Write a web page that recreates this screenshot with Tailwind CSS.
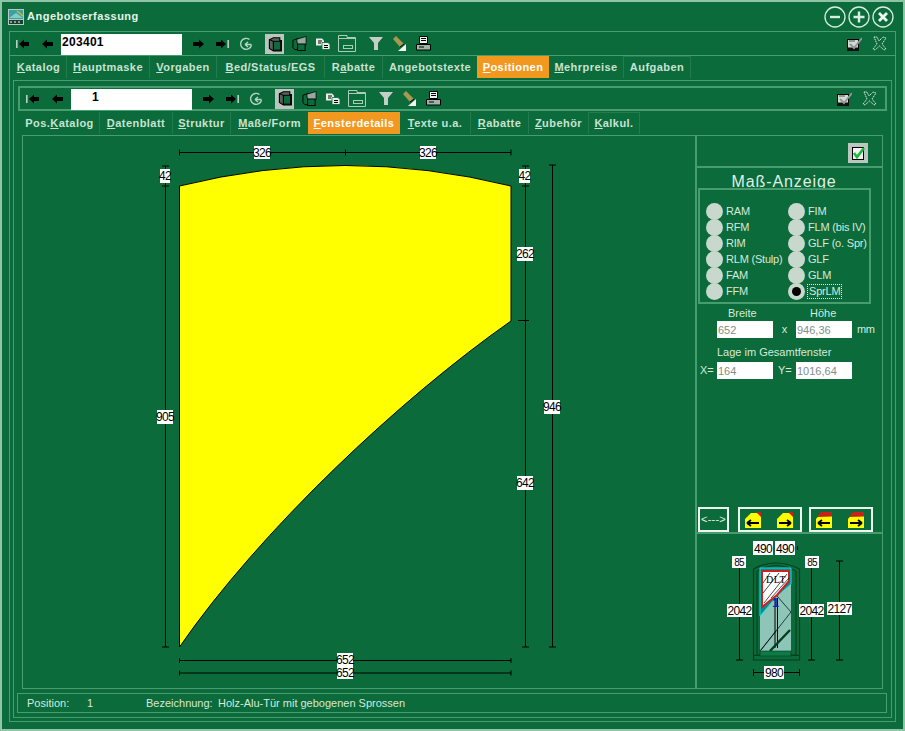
<!DOCTYPE html>
<html lang="de">
<head>
<meta charset="utf-8">
<title>Angebotserfassung</title>
<script src="https://cdn.jsdelivr.net/npm/@tailwindcss/browser@4"></script>
</head>
<body class="bg-[#0b6b3a]">
<svg width="0" height="0" class="absolute">
  <defs>
    <symbol id="first" viewBox="0 0 13 12"><rect x="0" y="2" width="1.6" height="8" fill="#b9cfc2"/><path d="M3 6 L8 1.5 V4 H13 V8 H8 V10.5 Z" fill="#000"/></symbol>
    <symbol id="prev" viewBox="0 0 11 12"><path d="M0 6 L5 1.5 V4 H11 V8 H5 V10.5 Z" fill="#000"/></symbol>
    <symbol id="next" viewBox="0 0 11 12"><path d="M11 6 L6 1.5 V4 H0 V8 H6 V10.5 Z" fill="#000"/></symbol>
    <symbol id="last" viewBox="0 0 13 12"><path d="M10 6 L5 1.5 V4 H0 V8 H5 V10.5 Z" fill="#000"/><rect x="11.4" y="2" width="1.6" height="8" fill="#b9cfc2"/></symbol>
    <symbol id="refresh" viewBox="0 0 14 14"><path d="M10.5 2.5 A5.5 5.5 0 1 0 12.5 8 M12.5 7.5 H6 M6 7.5 L9 5 M6 7.5 L9 10" fill="none" stroke="#b5d6c4" stroke-width="1.4"/></symbol>
    <symbol id="frame" viewBox="0 0 20 20"><path d="M3 4 L8 1.5 H16 V5 H18 V18 H8 L3 15 Z" fill="#55635b" stroke="#000" stroke-width="1.4"/><rect x="8" y="6" width="9" height="11" fill="#0b6b3a" stroke="#000" stroke-width="1.2"/><path d="M3 4 L8 6 V18" fill="none" stroke="#000" stroke-width="1.2"/></symbol>
    <symbol id="frame2" viewBox="0 0 16 17"><path d="M1 5 L7 3 V15 H3 L1 13 Z" fill="#0b6b3a" stroke="#000"/><path d="M5 4 L15 1 V10 H6 Z" fill="#9aa89f" stroke="#000" stroke-width=".8"/><rect x="6" y="9" width="8" height="7" fill="#0b6b3a" stroke="#000"/></symbol>
    <symbol id="copy" viewBox="0 0 14 12"><path d="M0 0.5 H6 L8 2.5 V7.5 H0 Z" fill="#e8eee8"/><path d="M6 4.5 H12 L14 6.5 V11.5 H6 Z" fill="#e8eee8" stroke="#0b6b3a" stroke-width=".8"/><path d="M2 3 H6 M2 5 H5 M8 7.5 H12 M8 9.5 H12" stroke="#000"/></symbol>
    <symbol id="folder" viewBox="0 0 18 17"><path d="M0.5 16.5 V0.5 H9 V2.5 H17.5 V16.5 Z M0.5 3.5 H17.5" fill="none" stroke="#a9cdb9"/><rect x="5.5" y="10.5" width="9" height="3" fill="none" stroke="#a9cdb9"/></symbol>
    <symbol id="filter" viewBox="0 0 14 15"><path d="M0 1 H14 L9 7 V14 H5 V7 Z" fill="#c4cfc8"/></symbol>
    <symbol id="wand" viewBox="0 0 15 16"><path d="M1 3 L4 0 L12 8 L8 11 Z" fill="#a59a4e"/><path d="M14 8 V15 H6 Z" fill="#f2f4f2"/><path d="M8 11 L12 8" stroke="#000"/></symbol>
    <symbol id="printer" viewBox="0 0 15 15"><path d="M3.5 .5 H11.5 V7.5 H3.5 Z" fill="#eef2ee" stroke="#000"/><path d="M5 2.5 H10 M5 4.5 H10" stroke="#000"/><path d="M.5 8.5 H14.5 V14 H.5 Z" fill="#9fb5a8" stroke="#000"/><path d="M3 11 H8" stroke="#000"/></symbol>
    <symbol id="save" viewBox="0 0 15 14"><rect x=".5" y="2.5" width="11" height="11" fill="#d5dad6" stroke="#000"/><rect x="0" y="10.5" width="12" height="3.5" fill="#111"/><path d="M2 4 H8 M3 7 L7 11 L15 1" fill="none" stroke="#8d9a92" stroke-width="2"/></symbol>
    <symbol id="cross" viewBox="0 0 15 15"><path d="M2 1 L5 1 L7 5 L11 1 L14 2 L10 8 L14 13 L12 14 L7.5 10 L3 14 L1 13 L5 8 Z" fill="none" stroke="#d7e6dc" stroke-dasharray="1.5 .7"/></symbol>
    <symbol id="note-up-l" viewBox="0 0 16 16"><path d="M0 7 L6 1 H16 V16 H0 Z" fill="#ffff00"/><path d="M11 0 H16 V5 Z" fill="#c8201a"/><path d="M2 11 H14 M2 11 L6 8 M2 11 L6 14" stroke="#000" stroke-width="1.8" fill="none"/></symbol>
    <symbol id="note-up-r" viewBox="0 0 16 16"><path d="M0 7 L6 1 H16 V16 H0 Z" fill="#ffff00"/><path d="M11 0 H16 V5 Z" fill="#c8201a"/><path d="M2 11 H14 M14 11 L10 8 M14 11 L10 14" stroke="#000" stroke-width="1.8" fill="none"/></symbol>
    <symbol id="note-top-l" viewBox="0 0 16 16"><path d="M0 7 L5 1 H16 V16 H0 Z" fill="#ffff00"/><path d="M1 5 L5 0 H16 V4.5 Z" fill="#c8201a"/><path d="M2 11 H14 M2 11 L6 8 M2 11 L6 14" stroke="#000" stroke-width="1.8" fill="none"/></symbol>
    <symbol id="note-top-r" viewBox="0 0 16 16"><path d="M0 7 L5 1 H16 V16 H0 Z" fill="#ffff00"/><path d="M1 5 L5 0 H16 V4.5 Z" fill="#c8201a"/><path d="M2 11 H14 M14 11 L10 8 M14 11 L10 14" stroke="#000" stroke-width="1.8" fill="none"/></symbol>
  </defs>
</svg>

<div class="w-[905px] h-[731px] overflow-hidden border-2 border-[#8fc4a6] pt-[2px] px-[7px] font-['Liberation_Sans',Arial,sans-serif] text-[#d5e9dd]">
  <!-- title -->
  <div class="h-[27px] flex items-center -ml-px pr-[2px] pb-[2px]">
    <svg class="w-[16px] h-[16px] mr-[3px]" viewBox="0 0 16 16"><rect width="16" height="16" fill="#b8c8c8"/><path d="M1 1 H15 V10 H1 Z" fill="#3ca0a0"/><path d="M1 9 L8 4 L15 9 Z" fill="#7fd0c0"/><path d="M9 2 L15 7" stroke="#e0b040" stroke-width="1.5"/><rect x="1" y="11" width="14" height="4" fill="#18402c"/><path d="M3 12 V14 M7 12 V14 M11 12 V14" stroke="#fff"/></svg>
    <span class="text-[11px] font-bold tracking-[0.5px] text-[#e6f3ea]">Angebotserfassung</span>
    <div class="ml-auto flex gap-[2px]">
      <svg class="w-[22px] h-[22px]" viewBox="0 0 22 22"><circle cx="11" cy="11" r="10" fill="none" stroke="#d9eee2" stroke-width="1.3"/><path d="M6 11 H16" stroke="#d9eee2" stroke-width="2.4"/></svg>
      <svg class="w-[22px] h-[22px]" viewBox="0 0 22 22"><circle cx="11" cy="11" r="10" fill="none" stroke="#d9eee2" stroke-width="1.3"/><path d="M5.5 11 H16.5 M11 5.5 V16.5" stroke="#d9eee2" stroke-width="2.4"/></svg>
      <svg class="w-[22px] h-[22px]" viewBox="0 0 22 22"><circle cx="11" cy="11" r="10" fill="none" stroke="#d9eee2" stroke-width="1.3"/><path d="M7 7 L15 15 M15 7 L7 15" stroke="#eef8f2" stroke-width="2.8"/></svg>
    </div>
  </div>
  <!-- frame 2 -->
  <div class="h-[691px] border border-[#479c70] flex flex-col">
    <!-- toolbar 1 -->
    <div class="h-[24px] border-b border-[#479c70] shrink-0 flex items-center">
      <svg class="w-[13px] h-[12px] ml-[6px]"><use href="#first"/></svg>
      <svg class="w-[11px] h-[12px] ml-[13px]"><use href="#prev"/></svg>
      <input class="w-[121px] h-[21px] ml-[8px] self-start mt-[2px] bg-white pl-[1px] pb-[5px] text-[12px] font-bold tracking-[0.3px] text-black outline-none" value="203401">
      <svg class="w-[11px] h-[12px] ml-[11px]"><use href="#next"/></svg>
      <svg class="w-[13px] h-[12px] ml-[12px]"><use href="#last"/></svg>
      <svg class="w-[14px] h-[14px] ml-[10px]"><use href="#refresh"/></svg>
      <div class="w-[19px] h-[20px] ml-[12px] self-start mt-[2px] bg-[#bcc6bf] flex items-center justify-center"><svg class="w-[16px] h-[17px]"><use href="#frame"/></svg></div>
      <svg class="w-[15px] h-[17px] ml-[8px]"><use href="#frame2"/></svg>
      <svg class="w-[14px] h-[12px] ml-[9px]"><use href="#copy"/></svg>
      <svg class="w-[18px] h-[17px] ml-[8px]"><use href="#folder"/></svg>
      <svg class="w-[14px] h-[15px] ml-[13px]"><use href="#filter"/></svg>
      <svg class="w-[15px] h-[16px] ml-[9px]"><use href="#wand"/></svg>
      <svg class="w-[15px] h-[15px] ml-[9px]"><use href="#printer"/></svg>
      <svg class="w-[15px] h-[14px] ml-auto"><use href="#save"/></svg>
      <svg class="w-[15px] h-[15px] ml-[10px] mr-[8px]"><use href="#cross"/></svg>
    </div>
    <!-- tabs 1 -->
    <div class="h-[22px] ml-[1px] flex shrink-0 text-[11px] font-bold tracking-[0.45px] text-[#c9e2d4]">
      <div class="w-[56px] border-r border-[#237c4d] flex items-center justify-center"><span><u>K</u>atalog</span></div>
      <div class="w-[83px] border-r border-[#237c4d] flex items-center justify-center"><span><u>H</u>auptmaske</span></div>
      <div class="w-[67px] border-r border-[#237c4d] flex items-center justify-center"><span><u>V</u>orgaben</span></div>
      <div class="w-[108px] border-r border-[#237c4d] flex items-center justify-center"><span><u>B</u>ed/Status/EGS</span></div>
      <div class="w-[58px] border-r border-[#237c4d] flex items-center justify-center"><span>R<u>a</u>batte</span></div>
      <div class="w-[94px] flex items-center justify-center"><span>Angebotstexte</span></div>
      <div class="w-[72px] bg-[#f2981f] text-white flex items-center justify-center"><span><u>P</u>ositionen</span></div>
      <div class="w-[75px] border-r border-[#237c4d] flex items-center justify-center"><span><u>M</u>ehrpreise</span></div>
      <div class="w-[67px] border-r border-t border-[#237c4d] flex items-center justify-center"><span>Aufgaben</span></div>
    </div>
    <!-- frame 3 -->
    <div class="mt-[2px] mx-[3px] h-[638px] border border-[#479c70] flex flex-col shrink-0">
      <!-- toolbar 2 -->
      <div class="h-[25px] mt-[5px] mx-[4px] border-2 border-[#479c70] shrink-0 flex items-center">
        <svg class="w-[13px] h-[12px] ml-[6px]"><use href="#first"/></svg>
        <svg class="w-[11px] h-[12px] ml-[13px]"><use href="#prev"/></svg>
        <input class="w-[121px] h-[21px] ml-[8px] self-start mt-[1px] bg-white pl-[21px] pb-[5px] text-[12px] font-bold text-black outline-none" value="1">
        <svg class="w-[11px] h-[12px] ml-[11px]"><use href="#next"/></svg>
        <svg class="w-[13px] h-[12px] ml-[12px]"><use href="#last"/></svg>
        <svg class="w-[14px] h-[14px] ml-[10px]"><use href="#refresh"/></svg>
        <div class="w-[19px] h-[20px] ml-[12px] bg-[#bcc6bf] flex items-center justify-center"><svg class="w-[16px] h-[17px]"><use href="#frame"/></svg></div>
        <svg class="w-[15px] h-[17px] ml-[8px]"><use href="#frame2"/></svg>
        <svg class="w-[14px] h-[12px] ml-[9px]"><use href="#copy"/></svg>
        <svg class="w-[18px] h-[17px] ml-[8px]"><use href="#folder"/></svg>
        <svg class="w-[14px] h-[15px] ml-[13px]"><use href="#filter"/></svg>
        <svg class="w-[15px] h-[16px] ml-[9px]"><use href="#wand"/></svg>
        <svg class="w-[15px] h-[15px] ml-[9px]"><use href="#printer"/></svg>
        <svg class="w-[15px] h-[14px] ml-auto"><use href="#save"/></svg>
        <svg class="w-[15px] h-[15px] ml-[10px] mr-[8px]"><use href="#cross"/></svg>
      </div>
      <!-- tabs 2 -->
      <div class="h-[22px] mt-[1px] ml-[6px] flex shrink-0 text-[11px] font-bold tracking-[0.45px] text-[#c9e2d4]">
        <div class="w-[80px] border-r border-[#237c4d] flex items-center justify-center"><span>Pos.<u>K</u>atalog</span></div>
        <div class="w-[73px] border-r border-[#237c4d] flex items-center justify-center"><span><u>D</u>atenblatt</span></div>
        <div class="w-[58px] border-r border-[#237c4d] flex items-center justify-center"><span><u>S</u>truktur</span></div>
        <div class="w-[77px] flex items-center justify-center"><span><u>M</u>aße/Form</span></div>
        <div class="w-[92px] bg-[#f2981f] text-white flex items-center justify-center"><span><u>F</u>ensterdetails</span></div>
        <div class="w-[71px] border-r border-[#237c4d] flex items-center justify-center"><span><u>T</u>exte u.a.</span></div>
        <div class="w-[58px] border-r border-[#237c4d] flex items-center justify-center"><span><u>R</u>abatte</span></div>
        <div class="w-[60px] border-r border-[#237c4d] flex items-center justify-center"><span><u>Z</u>ubehör</span></div>
        <div class="w-[51px] border-r border-t border-[#237c4d] flex items-center justify-center"><span><u>K</u>alkul.</span></div>
      </div>
      <!-- panel -->
      <div class="h-[554px] mt-[1px] ml-[8px] mr-[8px] border border-[#479c70] flex shrink-0">
        <!-- drawing -->
        <svg class="w-[672px] h-[552px] shrink-0" viewBox="23 136 672 552" font-family="'Liberation Sans',Arial,sans-serif" font-size="12" text-anchor="middle">
          <path d="M179.5 186 Q345 145 511 186 V321 C401 398 259.5 531 179.5 647 Z" fill="#ffff00" stroke="#000"/>
          <g stroke="#000" fill="none">
            <path d="M179.5 152.5 H511 M179.5 149.5 V155.5 M345.5 149.5 V155.5 M511 149.5 V155.5"/>
            <path d="M165.5 166 V647 M162 166 H169 M162 186 H169 M162 647 H169"/>
            <path d="M525.5 166 V647 M522 166 H529 M522 186 H529 M518 320.5 H529 M522 647 H529"/>
            <path d="M552.5 165 V647 M549 165 H556 M549 647 H556"/>
            <path d="M179.5 660.5 H511 M179.5 658 V663 M511 658 V663"/>
            <path d="M179.5 673 H511 M179.5 670.5 V675.5 M511 670.5 V675.5"/>
          </g>
          <g fill="#fff">
            <rect x="254" y="146" width="16" height="13"/><rect x="420" y="146" width="16" height="13"/>
            <rect x="160" y="169" width="10" height="14"/><rect x="157" y="410" width="16" height="14"/>
            <rect x="519" y="169" width="11" height="14"/><rect x="517" y="247" width="16" height="14"/><rect x="517" y="476" width="16" height="14"/>
            <rect x="544" y="400" width="16" height="14"/>
            <rect x="337" y="653" width="16" height="13"/><rect x="337" y="666" width="16" height="13"/>
          </g>
          <g fill="#000" letter-spacing="-.7">
            <text x="262" y="157">326</text><text x="428" y="157">326</text>
            <text x="165" y="180">42</text><text x="165" y="421">905</text>
            <text x="524.5" y="180">42</text><text x="525" y="258">262</text><text x="525" y="487">642</text>
            <text x="552" y="411">946</text>
            <text x="345" y="664">652</text><text x="345" y="677">652</text>
          </g>
        </svg>
        <!-- right column -->
        <div class="flex-1 border-l-2 border-[#479c70] flex flex-col text-[11px]">
          <div class="h-[32px] border-b-2 border-[#479c70] flex items-start justify-end pt-[7px] pr-[14px] shrink-0">
            <div class="w-[20px] h-[20px] bg-[#bcc6bf] flex items-center justify-center">
              <svg class="w-[15px] h-[15px]" viewBox="0 0 15 15"><rect x="1.5" y="1.5" width="11" height="12" fill="#f2f4f2" stroke="#000"/><path d="M3 7 L6 11 L13 2" fill="none" stroke="#1cb83a" stroke-width="2.6"/></svg>
            </div>
          </div>
          <div class="h-[20px] text-center text-[16px] leading-[28px] tracking-[0.9px] pr-[11px] text-[#dff0e6] shrink-0">Maß-Anzeige</div>
          <div class="ml-[1px] w-[173px] h-[116px] border-2 border-[#479c70] pt-[13px] pl-[6px] shrink-0 grid grid-cols-[82px_82px] auto-rows-[16px] tracking-[-0.2px]">
            <label class="flex items-center gap-[3px]"><span class="w-[17px] h-[17px] rounded-full bg-[#c9d8cd]"></span>RAM</label>
            <label class="flex items-center gap-[3px]"><span class="w-[17px] h-[17px] rounded-full bg-[#c9d8cd]"></span>FIM</label>
            <label class="flex items-center gap-[3px]"><span class="w-[17px] h-[17px] rounded-full bg-[#c9d8cd]"></span>RFM</label>
            <label class="flex items-center gap-[3px]"><span class="w-[17px] h-[17px] rounded-full bg-[#c9d8cd]"></span>FLM (bis IV)</label>
            <label class="flex items-center gap-[3px]"><span class="w-[17px] h-[17px] rounded-full bg-[#c9d8cd]"></span>RIM</label>
            <label class="flex items-center gap-[3px]"><span class="w-[17px] h-[17px] rounded-full bg-[#c9d8cd]"></span>GLF (o. Spr)</label>
            <label class="flex items-center gap-[3px] whitespace-nowrap"><span class="w-[17px] h-[17px] rounded-full bg-[#c9d8cd]"></span>RLM (Stulp)</label>
            <label class="flex items-center gap-[3px]"><span class="w-[17px] h-[17px] rounded-full bg-[#c9d8cd]"></span>GLF</label>
            <label class="flex items-center gap-[3px]"><span class="w-[17px] h-[17px] rounded-full bg-[#c9d8cd]"></span>FAM</label>
            <label class="flex items-center gap-[3px]"><span class="w-[17px] h-[17px] rounded-full bg-[#c9d8cd]"></span>GLM</label>
            <label class="flex items-center gap-[3px]"><span class="w-[17px] h-[17px] rounded-full bg-[#c9d8cd]"></span>FFM</label>
            <label class="flex items-center gap-[3px]"><span class="w-[17px] h-[17px] rounded-full bg-[#c9d8cd] flex items-center justify-center"><span class="w-[9px] h-[9px] rounded-full bg-black"></span></span><span class="border border-dotted border-[#e8f2ec] leading-[13px] px-px -ml-px">SprLM</span></label>
          </div>
          <div class="flex mt-[2px] pl-[31px] h-[14px] leading-[14px] shrink-0"><span class="w-[82px]">Breite</span><span>Höhe</span></div>
          <div class="flex items-center mt-px pl-[20px] h-[17px] shrink-0">
            <input class="w-[56px] h-[17px] bg-white pl-[1px] text-[11px] text-[#7f8f86] outline-none" value="652">
            <span class="w-[23px] text-center">x</span>
            <input class="w-[56px] h-[17px] bg-white pl-[1px] text-[11px] text-[#7f8f86] outline-none" value="946,36">
            <span class="ml-[5px] tracking-[-0.4px]">mm</span>
          </div>
          <div class="mt-[7px] pl-[20px] h-[14px] leading-[14px] shrink-0">Lage im Gesamtfenster</div>
          <div class="flex items-center mt-[3px] pl-[3px] h-[17px] shrink-0">
            <span class="w-[17px]">X=</span>
            <input class="w-[56px] h-[17px] bg-white pl-[1px] text-[11px] text-[#7f8f86] outline-none" value="164">
            <span class="w-[23px] pl-[5px]">Y=</span>
            <input class="w-[56px] h-[17px] bg-white pl-[1px] text-[11px] text-[#7f8f86] outline-none" value="1016,64">
          </div>
          <div class="flex mt-[128px] ml-px h-[25px] shrink-0">
            <div class="w-[31px] border-2 border-[#eef4f0] flex items-center justify-center text-[11px] text-[#e6f2ea] tracking-[0.2px]">&lt;---&gt;</div>
            <div class="w-[64px] ml-[9px] border-2 border-[#eef4f0] flex items-center pl-[5px] gap-[16px]"><svg class="w-[16px] h-[16px]"><use href="#note-up-l"/></svg><svg class="w-[16px] h-[16px]"><use href="#note-up-r"/></svg></div>
            <div class="w-[64px] ml-[7px] border-2 border-[#eef4f0] flex items-center pl-[5px] gap-[16px]"><svg class="w-[16px] h-[16px]"><use href="#note-top-l"/></svg><svg class="w-[16px] h-[16px]"><use href="#note-top-r"/></svg></div>
          </div>
          <div class="flex-1 border-t-2 border-[#479c70]">
            <svg class="w-[184px] h-[154px]" viewBox="697 534 184 154" font-family="'Liberation Sans',Arial,sans-serif" font-size="12" text-anchor="middle">
              <g fill="none" stroke="#063d20">
                <path d="M753.5 660 V569 Q776 557 799.5 569 V660 Z" stroke-width="1.2"/>
                <path d="M757 655 V571 Q776 560 796 571 V655 Z"/>
                <path d="M753.5 655.5 H799.5"/>
              </g>
              <rect x="760" y="569" width="31" height="82" fill="#8dc6b6"/>
              <path d="M760 568 H791 V584 L777 596 L760 616 Z" fill="#0b8c8c" stroke="#21d6e6"/>
              <path d="M762 571 H789 V581 L777 595 L762 607 Z" fill="#fff" stroke="#d0201a" stroke-width="2"/>
              <g stroke="#000" stroke-width=".7" fill="none">
                <path d="M763 583 L770 573 M763 593 L779 573 M764 603 L787 574 M771 598 L789 578"/>
                <path d="M777 596 L791 612 L761 650 M760 651 L776 631"/>
                <path d="M775 598 V648 M777.5 598 V648" stroke-width="1"/>
                <path d="M770 651 L790 630" stroke="#063d20" stroke-width="2.4"/>
              </g>
              <rect x="760" y="651" width="31" height="5" fill="#0e7a45" stroke="#063d20" stroke-width=".6"/>
              <text x="775.5" y="607" fill="#1020d0" font-size="12" font-weight="bold">1</text>
              <text x="776" y="583" fill="#000" font-size="10" font-family="'Liberation Serif',serif" letter-spacing=".5">DLT</text>
              <g stroke="#000" fill="none">
                <path d="M739.5 567 V660 M736 660 H743"/>
                <path d="M811.5 567 V660 M808 660 H815"/>
                <path d="M839.5 561 V660 M836 561 H843 M836 660 H843"/>
                <path d="M753.5 672.5 H799.5 M753.5 669 V676 M799.5 669 V676"/>
                <path d="M797.5 546 V550"/>
              </g>
              <g fill="#fff">
                <rect x="753" y="541" width="20" height="14"/><rect x="775" y="541" width="20" height="14"/>
                <rect x="732" y="556" width="14" height="12"/><rect x="805" y="556" width="14" height="12"/>
                <rect x="727" y="604" width="25" height="13"/><rect x="799" y="604" width="25" height="13"/>
                <rect x="827" y="602" width="25" height="13"/><rect x="764" y="666" width="20" height="13"/>
              </g>
              <g fill="#000" letter-spacing="-.7">
                <text x="763" y="552.5">490</text><text x="785" y="552.5">490</text>
                <text x="739" y="565.5" font-size="10">85</text><text x="812" y="565.5" font-size="10">85</text>
                <text x="739.5" y="615">2042</text><text x="811.5" y="615">2042</text>
                <text x="839.5" y="613">2127</text><text x="774" y="677">980</text>
              </g>
            </svg>
          </div>
        </div>
      </div>
      <!-- status -->
      <div class="h-[20px] mt-[4px] ml-[3px] mr-[4px] border border-[#479c70] flex items-center text-[11px] shrink-0 pl-[9px]">
        <span class="w-[60px]">Position:</span>
        <span class="w-[59px]">1</span>
        <span class="w-[72px]">Bezeichnung:</span>
        <span>Holz-Alu-Tür mit gebogenen Sprossen</span>
      </div>
    </div>
  </div>
</div>
</body>
</html>
